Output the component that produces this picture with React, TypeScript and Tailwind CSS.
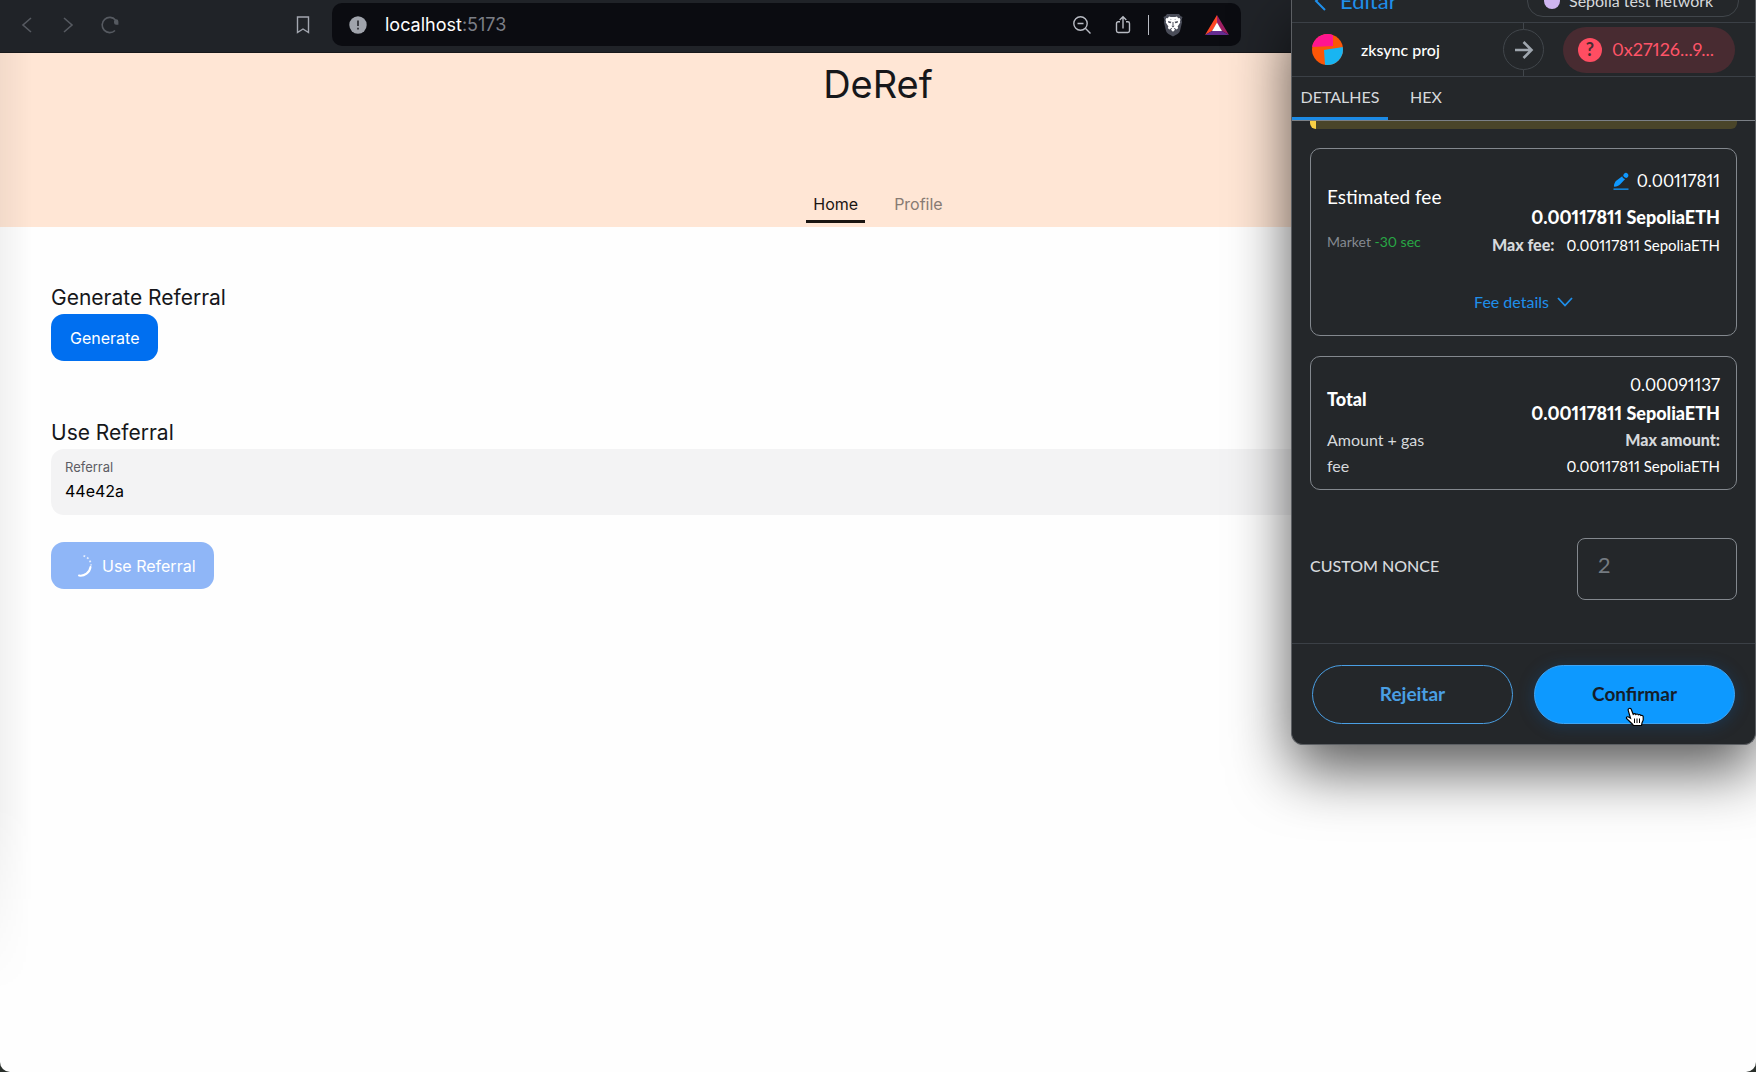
import type { ReactNode } from "react";

const TABS = [
  { name: "Home", active: true },
  { name: "Profile", active: false },
];

const FEE = "0.00117811";
const FEE_ETH = "0.00117811 SepoliaETH";

function BraveIcon() {
  return (
    <svg className="w-5 h-6" viewBox="0 0 20 24">
      <path
        d="M4 1h12l1.500 2 2 1-1 3 .6 2-2 8.500c-.4 1.600-1.300 2.500-2.600 3.400L10 23.600l-4.500-2.700c-1.300-.9-2.200-1.800-2.600-3.400L.9 9l.6-2-1-3 2-1z"
        fill="#4a4d59"
      />
      <path
        d="M6 3.600l1.800.5h4.400l1.800-.5 1.200 1.600 1.500-.3.8 2.200-.6 1 .3 1.400-2.600 4 .6 1.500-1.500 1.400-2.200-1.300-.7.4 1.300 1.200L10 18.800l-2.100-2.100 1.300-1.200-.7-.4-2.200 1.300-1.500-1.400.6-1.500-2.600-4 .3-1.400-.6-1 .8-2.200 1.500.3z"
        fill="#fff"
      />
      <path
        d="M5 8l3.400.8-.8 1.400-2.200-.5zM15 8l-3.400.8.8 1.400 2.200-.5zM8.400 12.800h3.200L10 14.400zM9.500 9h1v3.500h-1zM7 5.800l1.500.6-.5.500zM13 5.800l-1.500.6.5.500z"
        fill="#4a4d59"
      />
    </svg>
  );
}

function BatIcon() {
  return (
    <svg className="w-6 h-5" viewBox="0 0 24 20">
      <path d="M12 0v8L7 16 0 20z" fill="#ff4724" />
      <path d="M12 0l12 20-7-4-5-8z" fill="#9e1f63" />
      <path d="M0 20l7-4h10l7 4z" fill="#662d91" />
      <path d="M12 7.500l5 8.500H7z" fill="#fff" />
    </svg>
  );
}

function Toolbar() {
  return (
    <div className="flex h-[53px] items-start bg-[#202328] pt-[3px] border-b border-[#17181b]">
      <div className="flex h-[43px] w-[332px] shrink-0 items-center pl-[19px] pt-px text-[#565a61]">
        <button aria-label="Back" className="w-[18px]">
          <svg className="w-4 h-4" viewBox="0 0 16 16" fill="none" stroke="currentColor" strokeWidth="1.600">
            <path d="M12 1L4 8l8 7" />
          </svg>
        </button>
        <button aria-label="Forward" className="ml-6 w-[18px]">
          <svg className="w-4 h-4" viewBox="0 0 16 16" fill="none" stroke="currentColor" strokeWidth="1.600">
            <path d="M3 1l8 7-8 7" />
          </svg>
        </button>
        <button aria-label="Reload" className="ml-[22px]">
          <svg className="w-[18px] h-[18px]" viewBox="0 0 18 18" fill="none" stroke="currentColor" strokeWidth="1.600">
            <path d="M14 14.500A7.600 7.600 0 1 1 14.500 4" />
            <path d="M13 5.500a2.200 2.200 0 0 1 4.400 0v3.200h-2.200A2.200 2.200 0 0 1 13 6.500z" fill="currentColor" stroke="none" />
          </svg>
        </button>
        <button aria-label="Bookmark" className="ml-[177px]">
          <svg className="w-[14px] h-[18px]" viewBox="0 0 14 18" fill="none" stroke="#a3a7b0" strokeWidth="1.400">
            <path d="M1.500 1h11v15.500L7 13l-5.500 3.500z" />
          </svg>
        </button>
      </div>
      <div className="flex h-[43px] min-w-0 flex-1 items-center rounded-[10px] bg-[#0b0c11] pl-[17px] pr-3">
        <svg className="w-[18px] h-[18px] shrink-0" viewBox="0 0 18 18">
          <circle cx="9" cy="9" r="8.700" fill="#a0a4ac" />
          <path d="M9 4.500v5.500M9 11.800v1.600" stroke="#1b1d22" strokeWidth="1.500" />
        </svg>
        <p className="ml-[18px] flex-1 text-[18px] leading-6 text-[#7b7e86]">
          <span className="text-white">localhost</span>:5173
        </p>
        <div className="flex items-center text-[#b9bcc4]">
          <button aria-label="Zoom out">
            <svg className="w-[18px] h-[18px]" viewBox="0 0 18 18" fill="none" stroke="currentColor" strokeWidth="1.400">
              <circle cx="7.500" cy="7.500" r="6.700" />
              <path d="M4.500 7.500h6M12.300 12.300l5.200 5.200" />
            </svg>
          </button>
          <button aria-label="Share" className="ml-6">
            <svg className="w-4 h-5" viewBox="0 0 16 20" fill="none" stroke="currentColor" strokeWidth="1.400">
              <path d="M5 6.700H3.200c-1 0-1.700.7-1.700 1.700v7.400c0 1 .7 1.700 1.700 1.700h9.600c1 0 1.700-.7 1.700-1.700V8.400c0-1-.7-1.700-1.700-1.700H11" />
              <path d="M8 13.500V2M4.700 5L8 1.700 11.300 5" />
            </svg>
          </button>
          <span className="ml-[17px] h-5 w-px bg-[#b9bcc4]" />
          <button aria-label="Brave Shields" className="ml-[14px]">
            <BraveIcon />
          </button>
          <button aria-label="Brave Rewards" className="ml-[22px]">
            <BatIcon />
          </button>
        </div>
      </div>
      <div className="w-[515px] shrink-0" />
    </div>
  );
}

function Header() {
  return (
    <header className="flex flex-col items-center bg-[#ffe6d5] pt-[7px] pb-1">
      <h1 className="text-[38px] leading-[48px] text-[#16171a]">DeRef</h1>
      <nav className="mt-[84px] flex gap-[22px]">
        {TABS.map((tab) => (
          <a
            key={tab.name}
            href="#"
            className={`px-[7px] pb-1 text-base leading-6 border-b-3 ${
              tab.active ? "border-[#1a1512] text-[#1a1512]" : "border-transparent text-[#877b73]"
            }`}
          >
            {tab.name}
          </a>
        ))}
      </nav>
    </header>
  );
}

function Spinner() {
  return (
    <svg className="w-6 h-6" viewBox="0 0 24 24" fill="none" stroke="#fff">
      <path d="M20.500 13A10 10 0 0 1 9 21.500" strokeWidth="2" strokeLinecap="round" />
      <path d="M13.500 1.800A10 10 0 0 1 21 11.500" strokeWidth="1.800" strokeDasharray="1.800 2.200" opacity=".75" />
    </svg>
  );
}

function Card({ children }: { children: ReactNode }) {
  return <section className="rounded-[10px] border border-[#83888e] px-4">{children}</section>;
}

function Wallet() {
  return (
    <aside className="absolute right-0 top-0 z-10 w-[465px] rounded-b-xl border-x border-b border-[#5c5f63] bg-[#24272a] text-white shadow-[0_25px_60px_rgba(0,0,0,0.65)] font-[Lato,sans-serif] proportional-nums">
      {/* network */}
      <div className="-mt-8 flex h-[55px] items-end justify-between border-b border-[#3b4046] pb-[5px] pl-[22px] pr-4">
        <a href="#" className="flex items-center gap-[14px] text-[22px] leading-8 text-[#1f8fea]">
          <svg className="w-3 h-5" viewBox="0 0 12 20" fill="none" stroke="currentColor" strokeWidth="2">
            <path d="M11 1L2 10l9 9" />
          </svg>
          Editar
        </a>
        <div className="flex h-8 items-center gap-[9px] rounded-full border border-[#41464b] px-4 text-base text-[#d6d9dc]">
          <span className="h-4 w-4 rounded-full bg-[#cfb5f0]" />
          <span className="w-[153px]">Sepolia test network</span>
        </div>
      </div>

      {/* accounts */}
      <div className="flex h-[54px] items-center border-b border-[#3b4046] pl-5 pr-5">
        <svg className="w-[31px] h-[31px] rounded-full" viewBox="0 0 31 31">
          <path d="M0 0h31v31H0z" fill="#fb5607" />
          <path d="M0 0h21v12L0 13z" fill="#ff1590" />
          <path d="M12 16l19-3v18H13z" fill="#18b5f2" />
        </svg>
        <p className="ml-[18px] flex-1 text-base font-medium">zksync proj</p>
        <div className="flex flex-col items-center">
          <span className="h-[6px] w-px bg-[#41464b]" />
          <span className="flex h-[41px] w-[41px] items-center justify-center rounded-full border border-[#41464b]">
            <svg className="w-5 h-5" viewBox="0 0 20 20" fill="none" stroke="#9fa6ae" strokeWidth="2.600">
              <path d="M1 10h16M9.500 2l8 8-8 8" />
            </svg>
          </span>
          <span className="h-[6px] w-px bg-[#41464b]" />
        </div>
        <div className="ml-[19px] flex h-[46px] w-[172px] items-center gap-[10px] rounded-full bg-[#482b31] pl-[15px] text-[18px] text-[#ff5468]">
          <span className="flex h-6 w-6 items-center justify-center rounded-full bg-[#ff4d62] text-[18px] font-bold text-[#482b31]">
            ?
          </span>
          0x27126...9...
        </div>
      </div>

      {/* tabs */}
      <div className="flex h-11 border-b border-[#7b8086] text-base text-[#d6d9dc]">
        <button className="w-24 border-b-3 border-[#1c8ae4]">DETALHES</button>
        <button className="px-[22px] border-b-3 border-transparent">HEX</button>
      </div>

      <div className="px-[18px]">
        <div className="h-2 rounded-b-md border-l-6 border-[#f8cf45] bg-[#4a4529]" />

        <div className="mt-[19px]">
          <Card>
            <div className="flex justify-between pt-[18px]">
              <div className="pt-4">
                <h3 className="text-[19px] leading-7">Estimated fee</h3>
                <p className="mt-[17px] text-sm leading-7 text-[#848a91]">
                  Market <span className="text-[#28a745]">-30 sec</span>
                </p>
              </div>
              <div className="text-right leading-7">
                <p className="flex items-center justify-end gap-2 text-[17px] leading-7">
                  <button aria-label="Edit fee">
                    <svg className="w-4 h-[18px]" viewBox="0 0 16 18" fill="#0f98ff">
                      <path d="M.5 16.500h15v1.300H.5z" />
                      <path d="M10.200 3.300C11 1.500 12 .5 13.200.8c1.500.4 2.300 1.700 2.200 2.900-.1 1.200-1.200 2-2.300 2.300-1.600-.4-2.600-1.300-2.900-2.700z" />
                      <path d="M9.200 4.200c.3 1.400 1.400 2.500 3 2.900L7 12.600c-1 1.100-3.300 2-5.400 2.100-.5 0-.8-.3-.7-.8.2-2 1-4 2-5z" />
                    </svg>
                  </button>
                  {FEE}
                </p>
                <p className="mt-2 text-[18px] leading-7 font-black">{FEE_ETH}</p>
                <p className="flex items-center justify-end gap-3 text-[15px] leading-7">
                  <b className="text-base leading-7 font-black text-[#d6d9dc]">Max fee:</b>
                  {FEE_ETH}
                </p>
              </div>
            </div>
            <div className="flex justify-center pt-[29px] pb-[19px]">
              <button className="flex items-center gap-2 text-base leading-7 text-[#1f8fea]">
                Fee details
                <svg className="w-4 h-[10px]" viewBox="0 0 16 10" fill="none" stroke="currentColor" strokeWidth="1.800">
                  <path d="M1 1l7 7.500L15 1" />
                </svg>
              </button>
            </div>
          </Card>
        </div>

        <div className="mt-5">
          <Card>
            <div className="flex justify-between pt-[14px] pb-[10px]">
              <div className="pt-[14px]">
                <h3 className="text-[18px] leading-7 font-black">Total</h3>
                <p className="mt-[14px] w-[110px] text-base leading-[26px] text-[#d6d9dc]">Amount + gas fee</p>
              </div>
              <div className="text-right">
                <p className="text-[17px] leading-7">0.00091137</p>
                <p className="text-[18px] leading-7 font-black">{FEE_ETH}</p>
                <p className="text-base leading-[26px] font-black text-[#d6d9dc]">Max amount:</p>
                <p className="text-[15px] leading-[26px]">{FEE_ETH}</p>
              </div>
            </div>
          </Card>
        </div>

        <div className="mt-12 flex items-start justify-between">
          <label htmlFor="nonce" className="pt-4 text-base leading-6 font-medium text-[#d6d9dc]">
            CUSTOM NONCE
          </label>
          <input
            id="nonce"
            placeholder="2"
            className="h-[62px] w-40 rounded-lg border border-[#83888e] bg-transparent px-5 pb-[9px] text-[22px] text-white placeholder:text-[#757b81]"
          />
        </div>
      </div>

      {/* actions */}
      <div className="mt-[43px] flex gap-[21px] border-t border-[#3b4046] px-5 pt-[21px] pb-5 text-[19px] font-bold">
        <button className="h-[59px] flex-1 rounded-full border border-[#4a9fe4] text-[#4a9fe4]">Rejeitar</button>
        <button className="relative h-[59px] flex-1 rounded-full border border-[#3fa5f5] bg-[#0d99ff] text-[#141d2b] shadow-[0_2px_16px_rgba(13,90,160,0.35)]">
          Confirmar
          <svg className="absolute left-[90px] top-[41px] w-5 h-5" viewBox="0 0 20 20">
            <path
              d="M4 1.500c1.200-.7 2 .2 2.400 1.200l1.800 4.600c.8-.9 2-.8 2.600.2.800-.8 2.100-.6 2.600.4.900-.7 2-.4 2.500.6.900-.4 2 .1 2.300 1.200.4 2-.1 4.500-1.200 6.200l-.5 2.600H8.400c-.5-1.300-2-2.300-3.200-3.500L1.500 11.500c-.5-1.200.8-2.200 2-1.500l2 1.200L3.200 3.400c-.3-.8 0-1.500.8-1.900z"
              fill="#fff"
              stroke="#000"
              strokeWidth="1.200"
            />
            <path d="M9.500 11.500v4.500M12 11.500v4.500M14.500 11.500v4.500" stroke="#000" strokeWidth="1" />
          </svg>
        </button>
      </div>
    </aside>
  );
}

export default function App() {
  return (
    <div className="min-h-screen bg-[#2a2f2b] font-[Inter,sans-serif]">
      <div className="relative min-h-screen overflow-hidden rounded-b-[10px] bg-[#fefefe]">
        <Toolbar />
        <div className="relative">
          <div className="pointer-events-none absolute left-0 top-0 h-[940px] w-8 bg-linear-to-r from-black/5 to-transparent mask-[linear-gradient(black_80%,transparent)]" />
          <Header />
          <main className="px-[51px] pt-[55px]">
            <h2 className="text-[21px] leading-8 text-[#16171a]">Generate Referral</h2>
            <button className="h-[47px] rounded-[13px] bg-[#006ff0] px-[19px] text-base text-white">Generate</button>

            <h2 className="mt-14 text-[21px] leading-8 text-[#16171a]">Use Referral</h2>
            <div className="h-[66px] rounded-[13px] bg-[#f3f3f4] px-[14px] pt-2">
              <label htmlFor="referral" className="block text-[13px] leading-5 text-[#5d5d64]">
                Referral
              </label>
              <input
                id="referral"
                defaultValue="44e42a"
                className="block w-full bg-transparent text-base leading-7 text-black outline-none"
              />
            </div>
            <button className="mt-[27px] flex h-[47px] items-center gap-2 rounded-[13px] bg-[#8fb6f7] pl-[19px] pr-[18px] text-base text-white">
              <Spinner />
              Use Referral
            </button>
          </main>
        </div>
        <Wallet />
      </div>
    </div>
  );
}
